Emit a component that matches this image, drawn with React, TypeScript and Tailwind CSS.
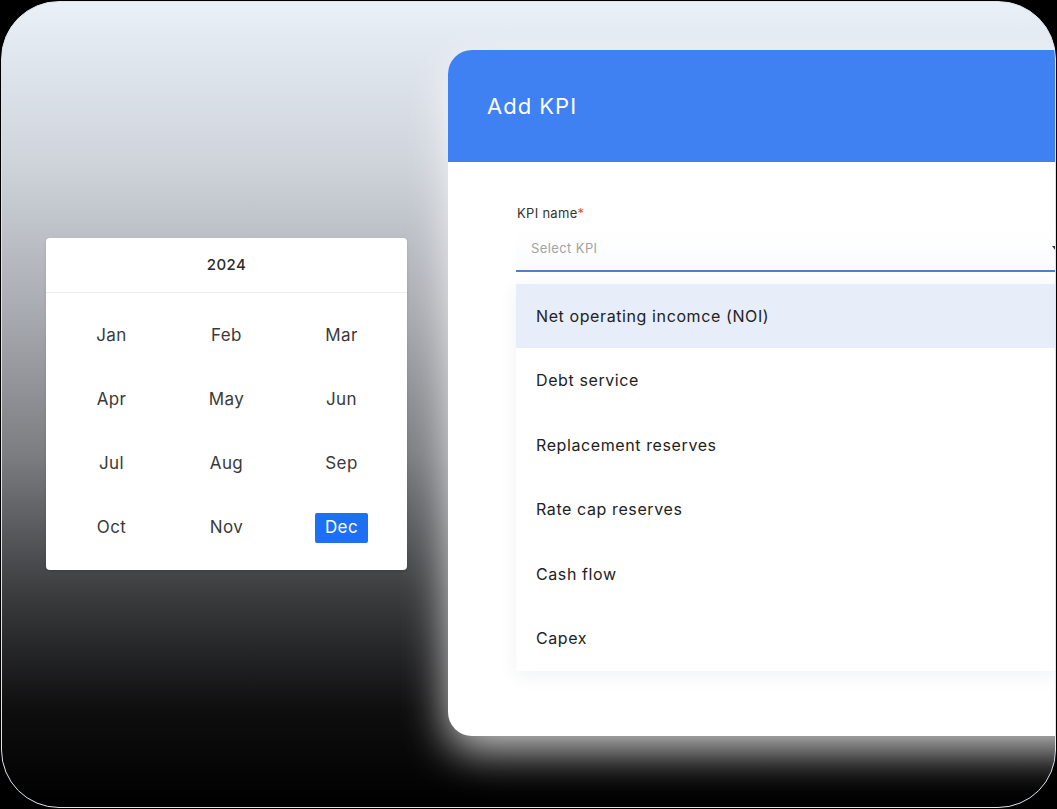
import React from 'react';

const months = ['Jan', 'Feb', 'Mar', 'Apr', 'May', 'Jun', 'Jul', 'Aug', 'Sep', 'Oct', 'Nov', 'Dec'];
const kpis = [
  'Net operating incomce (NOI)',
  'Debt service',
  'Replacement reserves',
  'Rate cap reserves',
  'Cash flow',
  'Capex',
];

const font = { fontFamily: 'Inter, "Open Sans", sans-serif' };

const App: React.FC = () => {
  return (
    <div className="w-[1057px] h-[809px] bg-black p-px" style={font}>
      <div className="h-full w-full rounded-[58px] border border-[#dde4ee] overflow-hidden bg-[linear-gradient(180deg,#eaf0f8_0%,#cfd4db_20%,#a9acb2_38%,#7c7e82_56%,#3d3e40_73%,#0e0e0f_88%,#000_100%)]">
        <div className="flex items-start pl-[44px] pt-[48px] gap-[41px]">
          {/* MONTH PICKER */}
          <div className="mt-[188px] w-[361px] shrink-0 bg-white rounded-[4px] shadow-sm">
            <div className="h-[55px] flex items-center justify-center border-b border-[#ececec] text-[15px] font-medium tracking-[0.4px] text-[#2b2b2b]">
              2024
            </div>
            <div className="grid grid-cols-3 px-[8px] pt-[11px] pb-[10px]">
              {months.map((m) => (
                <div key={m} className="h-[64px] flex items-center justify-center">
                  {m === 'Dec' ? (
                    <span className="w-[53px] h-[30px] flex items-center justify-center rounded-[2px] bg-[#1d6ff3] text-white text-[17px] tracking-[0.4px]">
                      {m}
                    </span>
                  ) : (
                    <span className="text-[17px] tracking-[0.4px] text-[#3a3a3a]">{m}</span>
                  )}
                </div>
              ))}
            </div>
          </div>

          {/* ADD KPI MODAL */}
          <div className="w-[700px] shrink-0 h-[686px] bg-white rounded-l-[24px] overflow-hidden shadow-[0_14px_44px_rgba(255,255,255,0.8)]">
            <div className="h-[112px] bg-[#3f80f3] flex items-center pl-[39px]">
              <h1 className="text-[22px] text-white font-normal tracking-[1px]">Add KPI</h1>
            </div>
            <div className="pl-[68px] pt-[42px] w-[610px]">
              <label className="block text-[13px] text-[#333] ml-[1px] tracking-[0.3px]">
                KPI name<span className="text-[#e8542c]">*</span>
              </label>
              <div className="mt-[5px] h-[43px] relative flex items-center pl-[15px] border-b-2 border-[#4d7fc2] bg-[linear-gradient(180deg,#fff,#fafbfd)]">
                <span className="text-[13px] text-[#a3a3a3] tracking-[0.4px]">Select KPI</span>
                <span className="absolute right-[-2px] top-[17px] w-0 h-0 border-l-[4px] border-r-[4px] border-t-[5px] border-l-transparent border-r-transparent border-t-[#333]" />
              </div>
              <div className="mt-[12px] bg-white shadow-[0_4px_18px_rgba(30,50,90,0.07)]">
                {kpis.map((k, i) => (
                  <div
                    key={k}
                    className={`h-[64.5px] flex items-center pl-[20px] text-[16px] tracking-[0.6px] text-[#222] ${i === 0 ? 'bg-[#e7eef9]' : ''}`}
                  >
                    {k}
                  </div>
                ))}
              </div>
            </div>
          </div>
        </div>
      </div>
    </div>
  );
};

export default App;
